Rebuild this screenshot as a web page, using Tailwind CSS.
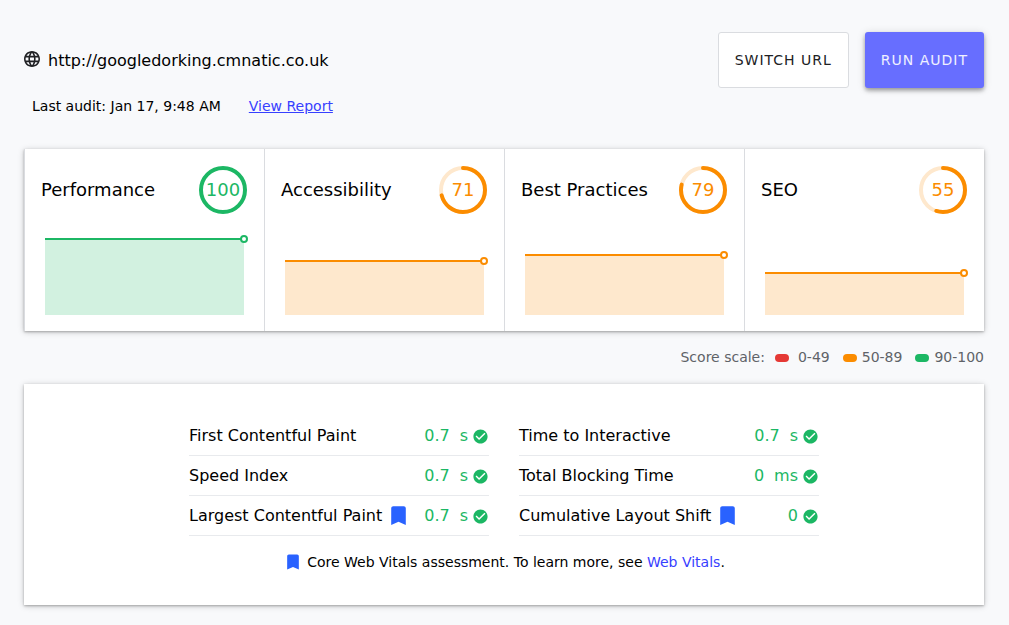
<!DOCTYPE html>
<html lang="en">
<head>
<meta charset="utf-8">
<meta name="viewport" content="width=device-width, initial-scale=1">
<title>Site audit</title>
<script src="https://cdn.jsdelivr.net/npm/@tailwindcss/browser@4"></script>
</head>
<body class="bg-[#f8f9fb] text-black font-['DejaVu_Sans',sans-serif] text-base">
<svg class="hidden" aria-hidden="true">
  <symbol id="check" viewBox="0 0 24 24"><path fill="currentColor" d="M12 2C6.48 2 2 6.48 2 12s4.48 10 10 10 10-4.480 10-10S17.520 2 12 2zm-2 15l-5-5 1.410-1.410L10 14.170l7.590-7.590L19 8l-9 9z"/></symbol>
  <symbol id="bookmark" viewBox="0 0 24 24"><path fill="currentColor" d="M17 3H7c-1.100 0-1.990.9-1.990 2L5 21l7-3 7 3V5c0-1.100-.9-2-2-2z"/></symbol>
</svg>
<main class="pt-8 pr-[25px] pb-5 pl-6">
  <header class="flex flex-wrap items-center justify-between gap-4">
    <h1 class="flex items-center gap-2 pt-px">
      <svg class="mb-[3px] size-4 shrink-0 text-[#202124]" viewBox="2 2 20 20" fill="currentColor" aria-hidden="true"><path d="M11.990 2C6.470 2 2 6.480 2 12s4.470 10 9.990 10C17.520 22 22 17.520 22 12S17.520 2 11.990 2zm6.930 6h-2.950c-.32-1.250-.78-2.450-1.380-3.560 1.840.63 3.370 1.910 4.330 3.560zM12 4.040c.83 1.200 1.480 2.530 1.910 3.960h-3.820c.43-1.430 1.080-2.760 1.910-3.960zM4.260 14C4.100 13.360 4 12.690 4 12s.1-1.360.26-2h3.380c-.08.66-.14 1.320-.14 2s.06 1.340.14 2H4.260zm.82 2h2.950c.32 1.250.78 2.450 1.380 3.560-1.840-.63-3.370-1.900-4.330-3.560zm2.950-8H5.080c.96-1.660 2.490-2.930 4.330-3.560C8.810 5.550 8.350 6.750 8.030 8zM12 19.960c-.83-1.200-1.480-2.530-1.910-3.960h3.820c-.43 1.430-1.080 2.760-1.910 3.960zM14.340 14H9.660c-.09-.66-.16-1.320-.16-2s.07-1.350.16-2h4.680c.09.65.16 1.320.16 2s-.07 1.340-.16 2zm.25 5.560c.6-1.110 1.060-2.310 1.380-3.560h2.950c-.96 1.650-2.490 2.930-4.330 3.560zM16.360 14c.08-.66.14-1.320.14-2s-.06-1.340-.14-2h3.380c.16.64.26 1.310.26 2s-.1 1.360-.26 2h-3.380z"/></svg>
      http://googledorking.cmnatic.co.uk
    </h1>
    <div class="flex gap-4">
      <button type="button" class="h-14 rounded-[3px] border border-[#dadce0] bg-white px-4 text-sm tracking-[1px] text-[#202124]">SWITCH URL</button>
      <button type="button" class="h-14 rounded-[3px] bg-[#676eff] px-4 text-sm tracking-[1px] text-white/90 shadow-[0_2px_4px_-1px_rgba(0,0,0,0.2),0_3px_4px_0_rgba(0,0,0,0.2),0_1px_8px_0_rgba(0,0,0,0.14)]">RUN AUDIT</button>
    </div>
  </header>
  <p class="mt-2 flex gap-7 pl-2 text-sm"><span>Last audit: Jan 17, 9:48 AM</span><a href="#report" class="text-[#3740ff] underline">View Report</a></p>

  <section class="mt-[33px] grid grid-cols-4 bg-white shadow-[0_1px_2px_0_rgba(0,0,0,0.24),0_1px_6px_0_rgba(0,0,0,0.22)]">
    <article class="border-l border-[#dadce0] pt-[17px] pr-[17px] pb-4 pl-4 text-[#1cb764]">
      <div class="flex items-center justify-between text-lg">
        <h2 class="text-black">Performance</h2>
        <div class="relative grid size-12 place-items-center"><svg class="absolute inset-0 size-12 -rotate-90" viewBox="0 0 48 48" fill="none" stroke="currentColor" stroke-width="4"><circle cx="24" cy="24" r="22"/></svg>100</div>
      </div>
      <div class="mt-5 pr-[3px] pl-1"><svg class="block h-[81px] w-full overflow-visible"><rect y="5" width="100%" height="76" fill="#d2f1e0"/><line x1="0" y1="5" x2="100%" y2="5" stroke="currentColor" stroke-width="2"/><circle cx="100%" cy="5" r="3" fill="white" stroke="currentColor" stroke-width="2"/></svg></div>
    </article>
    <article class="border-l border-[#dadce0] pt-[17px] pr-[17px] pb-4 pl-4 text-[#fb8c00]">
      <div class="flex items-center justify-between text-lg">
        <h2 class="text-black">Accessibility</h2>
        <div class="relative grid size-12 place-items-center"><svg class="absolute inset-0 size-12 -rotate-90" viewBox="0 0 48 48" fill="none" stroke-width="4"><circle cx="24" cy="24" r="22" stroke="#fee8cd"/><circle cx="24" cy="24" r="22" stroke="currentColor" stroke-linecap="round" pathLength="100" stroke-dasharray="71 100"/></svg>71</div>
      </div>
      <div class="mt-5 pr-[3px] pl-1"><svg class="block h-[81px] w-full overflow-visible"><rect y="27" width="100%" height="54" fill="#fee8cd"/><line x1="0" y1="27" x2="100%" y2="27" stroke="currentColor" stroke-width="2"/><circle cx="100%" cy="27" r="3" fill="white" stroke="currentColor" stroke-width="2"/></svg></div>
    </article>
    <article class="border-l border-[#dadce0] pt-[17px] pr-[17px] pb-4 pl-4 text-[#fb8c00]">
      <div class="flex items-center justify-between text-lg">
        <h2 class="text-black">Best Practices</h2>
        <div class="relative grid size-12 place-items-center"><svg class="absolute inset-0 size-12 -rotate-90" viewBox="0 0 48 48" fill="none" stroke-width="4"><circle cx="24" cy="24" r="22" stroke="#fee8cd"/><circle cx="24" cy="24" r="22" stroke="currentColor" stroke-linecap="round" pathLength="100" stroke-dasharray="79 100"/></svg>79</div>
      </div>
      <div class="mt-5 pr-[3px] pl-1"><svg class="block h-[81px] w-full overflow-visible"><rect y="21" width="100%" height="60" fill="#fee8cd"/><line x1="0" y1="21" x2="100%" y2="21" stroke="currentColor" stroke-width="2"/><circle cx="100%" cy="21" r="3" fill="white" stroke="currentColor" stroke-width="2"/></svg></div>
    </article>
    <article class="border-l border-[#dadce0] pt-[17px] pr-[17px] pb-4 pl-4 text-[#fb8c00]">
      <div class="flex items-center justify-between text-lg">
        <h2 class="text-black">SEO</h2>
        <div class="relative grid size-12 place-items-center"><svg class="absolute inset-0 size-12 -rotate-90" viewBox="0 0 48 48" fill="none" stroke-width="4"><circle cx="24" cy="24" r="22" stroke="#fee8cd"/><circle cx="24" cy="24" r="22" stroke="currentColor" stroke-linecap="round" pathLength="100" stroke-dasharray="55 100"/></svg>55</div>
      </div>
      <div class="mt-5 pr-[3px] pl-1"><svg class="block h-[81px] w-full overflow-visible"><rect y="39" width="100%" height="42" fill="#fee8cd"/><line x1="0" y1="39" x2="100%" y2="39" stroke="currentColor" stroke-width="2"/><circle cx="100%" cy="39" r="3" fill="white" stroke="currentColor" stroke-width="2"/></svg></div>
    </article>
  </section>

  <div class="mt-4 flex items-center justify-end text-sm text-[#5f6368]">
    <span>Score scale:</span>
    <i class="mt-[2px] ml-[10px] h-2 w-[14px] rounded-full bg-[#e53935]"></i><span class="ml-[9px]">0-49</span>
    <i class="mt-[2px] ml-[13px] h-2 w-[14px] rounded-full bg-[#fb8c00]"></i><span class="ml-[5px]">50-89</span>
    <i class="mt-[2px] ml-[13px] h-2 w-[14px] rounded-full bg-[#1cb764]"></i><span class="ml-[5px]">90-100</span>
  </div>

  <section class="mt-[17px] bg-white px-4 pt-8 pb-[33px] shadow-[0_1px_2px_0_rgba(0,0,0,0.24),0_1px_6px_0_rgba(0,0,0,0.22)]">
    <div class="mx-auto grid max-w-[630px] grid-cols-2 gap-x-[30px]">
      <div class="flex h-10 items-center border-b border-[#e8eaed]"><span>First Contentful Paint</span><span class="ml-auto flex items-center gap-[10px] text-[#1cb764]"><span>0.7</span><span>s</span></span><svg class="mt-px ml-1 size-[17px] text-[#1cb764]"><use href="#check"/></svg></div>
      <div class="flex h-10 items-center border-b border-[#e8eaed]"><span>Time to Interactive</span><span class="ml-auto flex items-center gap-[10px] text-[#1cb764]"><span>0.7</span><span>s</span></span><svg class="mt-px ml-1 size-[17px] text-[#1cb764]"><use href="#check"/></svg></div>
      <div class="flex h-10 items-center border-b border-[#e8eaed]"><span>Speed Index</span><span class="ml-auto flex items-center gap-[10px] text-[#1cb764]"><span>0.7</span><span>s</span></span><svg class="mt-px ml-1 size-[17px] text-[#1cb764]"><use href="#check"/></svg></div>
      <div class="flex h-10 items-center border-b border-[#e8eaed]"><span>Total Blocking Time</span><span class="ml-auto flex items-center gap-[10px] text-[#1cb764]"><span>0</span><span>ms</span></span><svg class="mt-px ml-1 size-[17px] text-[#1cb764]"><use href="#check"/></svg></div>
      <div class="flex h-10 items-center border-b border-[#e8eaed]"><span>Largest Contentful Paint</span><svg class="ml-1 size-[25px] text-[#2962ff]"><use href="#bookmark"/></svg><span class="ml-auto flex items-center gap-[10px] text-[#1cb764]"><span>0.7</span><span>s</span></span><svg class="mt-px ml-1 size-[17px] text-[#1cb764]"><use href="#check"/></svg></div>
      <div class="flex h-10 items-center border-b border-[#e8eaed]"><span>Cumulative Layout Shift</span><svg class="ml-1 size-[25px] text-[#2962ff]"><use href="#bookmark"/></svg><span class="ml-auto text-[#1cb764]">0</span><svg class="mt-px ml-1 size-[17px] text-[#1cb764]"><use href="#check"/></svg></div>
    </div>
    <p class="mt-4 flex items-center justify-center text-sm"><svg class="mr-1 size-5 text-[#2962ff]" aria-hidden="true"><use href="#bookmark"/></svg><span>Core Web Vitals assessment. To learn more, see <a href="#web-vitals" class="text-[#3740ff]">Web Vitals</a>.</span></p>
  </section>
</main>
</body>
</html>
